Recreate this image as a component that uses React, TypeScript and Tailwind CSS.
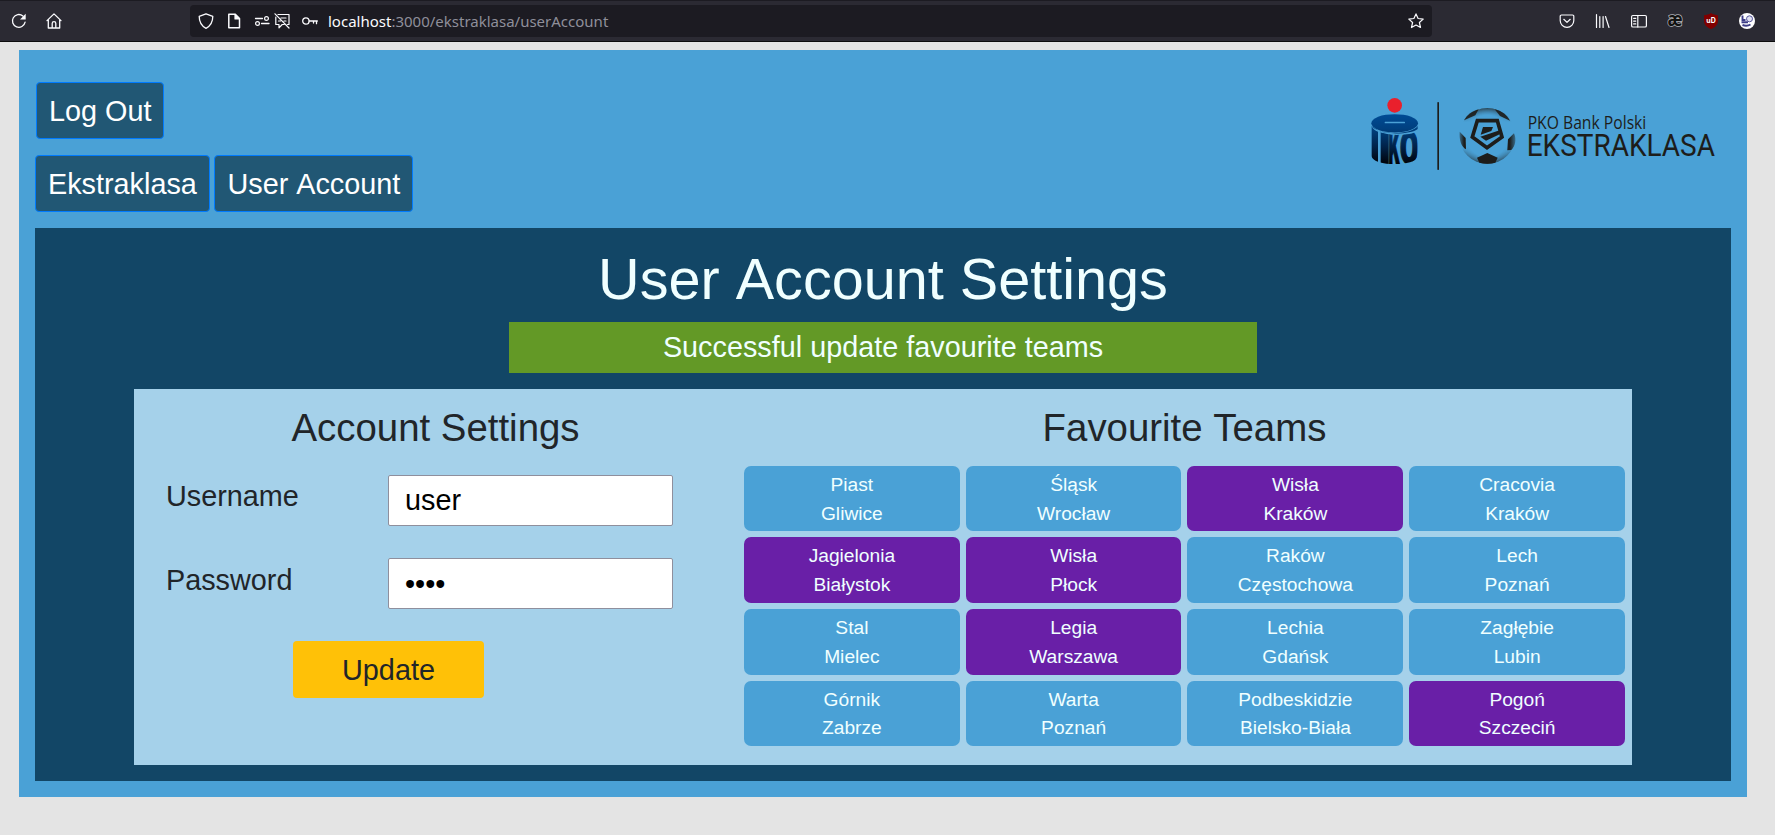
import React from "react";

const teams: [string, string, boolean][] = [
  ["Piast", "Gliwice", false],
  ["Śląsk", "Wrocław", false],
  ["Wisła", "Kraków", true],
  ["Cracovia", "Kraków", false],
  ["Jagielonia", "Białystok", true],
  ["Wisła", "Płock", true],
  ["Raków", "Częstochowa", false],
  ["Lech", "Poznań", false],
  ["Stal", "Mielec", false],
  ["Legia", "Warszawa", true],
  ["Lechia", "Gdańsk", false],
  ["Zagłębie", "Lubin", false],
  ["Górnik", "Zabrze", false],
  ["Warta", "Poznań", false],
  ["Podbeskidzie", "Bielsko-Biała", false],
  ["Pogoń", "Szczeciń", true],
];

function Icon({ className, children }: { className?: string; children: React.ReactNode }) {
  return (
    <svg
      viewBox="0 0 16 16"
      fill="none"
      stroke="#fbfbfe"
      strokeWidth="1.2"
      strokeLinecap="round"
      strokeLinejoin="round"
      className={"size-4 shrink-0 " + (className ?? "")}
    >
      {children}
    </svg>
  );
}

function Toolbar() {
  return (
    <header className="flex h-[42px] items-center border-t border-b border-t-[#1c1b22] border-b-[#0c0c0d] bg-[#2b2a33] pl-[11px] pr-5">
      <Icon>
        <path d="M14.1 9.2A6.400 6.400 0 1 1 11.900 3" strokeWidth="1.3" />
        <path d="M14.700 .8v5.600H9z" fill="#fbfbfe" stroke="none" />
      </Icon>
      <Icon className="ml-[19px]">
        <path d="M1 7.600 8 .9l7 6.700M2.300 6.800V15H13.700V6.800M6.200 14.800V10.500a1.800 1.800 0 0 1 3.600 0v4.300" strokeWidth="1.3" />
      </Icon>
      <div className="ml-32 flex h-8 w-[1242px] items-center rounded bg-[#1c1b22] pl-2 pr-2">
        <Icon>
          <path d="M8 .8 14.800 3.300C14.800 8.500 13 12.800 8 15.300 3 12.800 1.200 8.500 1.200 3.300z" strokeWidth="1.3" />
        </Icon>
        <Icon className="ml-3">
          <path d="M2.800 1.300H9.300L13.500 5.500V14.700H2.800z" strokeWidth="1.500" />
          <path d="M9 1.500V6h4.500z" fill="#fbfbfe" />
        </Icon>
        <Icon className="ml-3">
          <path d="M1.500 5.500H8.500M7.500 10.500h7.500" strokeWidth="1.300" />
          <circle cx="12.500" cy="5.500" r="1.900" />
          <circle cx="3.500" cy="10.500" r="1.900" />
        </Icon>
        <Icon className="ml-1">
          <path d="M4 1.500H15V11.500H13.500M1.800 4V11.500H5V14.800L8.200 11.500H10M7 5H12M10 8H12M4.500 8H6.500M1 .8 15 15" />
        </Icon>
        <Icon className="ml-3">
          <circle cx="3.900" cy="8" r="3.200" strokeWidth="1.300" />
          <path d="M7.200 8H15.400M14.500 8v2.700M11.500 8v2" strokeWidth="1.300" />
        </Icon>
        <div className="ml-[10px] whitespace-nowrap font-['Noto_Sans',sans-serif] text-[15px] leading-8 text-[#8f8f9a]">
          <span className="text-[#fbfbfe]">localhost</span>:3000/ekstraklasa/userAccount
        </div>
        <Icon className="ml-auto">
          <path d="m8 .9 2.100 4.600 5.100.6-3.800 3.400 1.100 5L8 12l-4.500 2.500 1.100-5L.8 6.100 5.900 5.500z" strokeWidth="1.200" />
        </Icon>
      </div>
      <div className="ml-auto flex items-center gap-5">
        <Icon>
          <path d="M2.500 2H13.500a1.300 1.300 0 0 1 1.300 1.300V7.500a6.800 6.800 0 0 1-13.600 0V3.300A1.300 1.300 0 0 1 2.500 2zM4.800 6.300 8 9.400l3.200-3.100" strokeWidth="1.200" />
        </Icon>
        <Icon>
          <path d="M1.500 1.500V14.500M4.800 3.500V14.500M8.100 3.500V14.500M10.500 3.500 14 14.500" />
        </Icon>
        <Icon>
          <rect x=".6" y="2.500" width="14.800" height="11.500" rx="1.300" strokeWidth="1.200" />
          <path d="M6.800 2.500V14M2.600 5.300H4.800M2.600 8.100H4.800M2.600 10.900H4.800" />
        </Icon>
        <svg viewBox="0 0 16 16" className="size-4 overflow-visible">
          <text x=".5" y="13.300" fontFamily="Noto Sans" fontWeight="700" fontSize="19" textLength="15" lengthAdjust="spacingAndGlyphs" fill="#111" stroke="#b4b4ba" strokeWidth="1.600" paintOrder="stroke">æ</text>
        </svg>
        <svg viewBox="0 0 16 16" className="size-4 overflow-visible">
          <path d="M8 0C6 1.500 3.500 2 1 2.200V7.500C1 12 4 14.500 8 16 12 14.500 15 12 15 7.500V2.200C12.500 2 10 1.500 8 0z" fill="#800000" />
          <text x="3.300" y="10" fontFamily="Inter" fontWeight="700" fontSize="7" textLength="9.400" lengthAdjust="spacingAndGlyphs" fill="#fff">uD</text>
        </svg>
        <svg viewBox="0 0 16 16" className="size-4">
          <circle cx="8" cy="8" r="8" fill="#fff" />
          <path d="M3.500 2.500v4.500h3M2.500 9.300H9M3.500 12c2 .8 5.500 1 8-.5" fill="none" stroke="#3c3c86" strokeWidth="1.900" />
          <circle cx="10.500" cy="5.800" r="3" fill="#dfe0f2" stroke="#55559a" />
        </svg>
      </div>
    </header>
  );
}

function LeagueLogo() {
  return (
    <svg viewBox="60 48 1050 225" className="h-[75px] w-[350px] overflow-visible">
      <defs>
        <linearGradient id="bank" x1="0" y1="100" x2="0" y2="252" gradientUnits="userSpaceOnUse">
          <stop offset="0" stopColor="#004c97" />
          <stop offset=".3" stopColor="#00407f" />
          <stop offset=".65" stopColor="#00234a" />
          <stop offset="1" stopColor="#000208" />
        </linearGradient>
        <radialGradient id="rim" cx="412" cy="168" r="84" gradientUnits="userSpaceOnUse">
          <stop offset=".75" stopColor="#1d1d1b" stopOpacity="0" />
          <stop offset="1" stopColor="#1d1d1b" stopOpacity=".7" />
        </radialGradient>
        <linearGradient id="fade" x1="0" y1="84" x2="0" y2="252" gradientUnits="userSpaceOnUse">
          <stop offset="0" stopColor="#fff" />
          <stop offset=".25" stopColor="#000" />
          <stop offset=".7" stopColor="#000" />
          <stop offset="1" stopColor="#fff" />
        </linearGradient>
        <linearGradient id="left" x1="0" y1="0" x2="1" y2="0">
          <stop offset="0" stopColor="#1d1d1b" stopOpacity=".4" />
          <stop offset=".7" stopColor="#1d1d1b" />
        </linearGradient>
        <linearGradient id="right" x1="1" y1="0" x2="0" y2="0">
          <stop offset="0" stopColor="#1d1d1b" stopOpacity=".4" />
          <stop offset=".7" stopColor="#1d1d1b" />
        </linearGradient>
        <mask id="ends">
          <rect x="320" y="80" width="190" height="180" fill="url(#fade)" />
        </mask>
        <clipPath id="drum">
          <path d="M64 130V227C68 246 100 252 134 252S200 246 203 227V154C190 161 170 165 140 165 120 165 100 160 91 157V130z" />
        </clipPath>
      </defs>
      <circle cx="134" cy="76" r="22" fill="#e9202c" />
      <ellipse cx="134" cy="130" rx="70" ry="27.500" fill="url(#bank)" />
      <rect x="104" y="125" width="61" height="5" rx="2" fill="#4aa1d6" />
      <path d="M65 138C68 147 75 152 84 155V245C74 241 65 235 65 227z" fill="url(#bank)" />
      <path d="M65 138C85 166 183 166 203 138V147C185 163 110 165 84 151z" fill="url(#bank)" />
      <g clipPath="url(#drum)" fill="url(#bank)" stroke="url(#bank)" fontFamily="Roboto" fontWeight="900" fontSize="138">
        <rect x="92" y="150" width="24" height="105" stroke="none" />
        <text x="115" y="253" textLength="34" lengthAdjust="spacingAndGlyphs" strokeWidth="3">K</text>
        <text x="150" y="253" textLength="55" lengthAdjust="spacingAndGlyphs" strokeWidth="5">O</text>
      </g>
      <rect x="262" y="66" width="5" height="204" rx="2" fill="#1d1d1b" />
      <circle cx="412" cy="168" r="84" fill="url(#rim)" mask="url(#ends)" />
      <g fill="#1d1d1b">
        <path d="M342 121C352 104 366 93 386 88L376 106z" fillOpacity=".9" />
        <path d="M434 88C455 92 470 105 480 122L450 108z" fillOpacity=".9" />
        <path d="M329 155 347 174 348 208C333 200 327 178 329 155z" fill="url(#left)" />
        <path d="M492 160C500 178 496 198 484 210L472 211 474 178z" fill="url(#right)" />
        <path d="M412 219 443 233 436 248C421 252 403 252 388 248L381 233z" />
      </g>
      <path d="M382 122H442L456 171 411 203 367 171z" fill="none" stroke="#1d1d1b" strokeWidth="11" />
      <path d="M399 141H429L424 153 392 164z" fill="#1d1d1b" />
      <path d="M391 170 449 151V163L408 182z" fill="#1d1d1b" />
      <g fill="#1d1d1b" fontFamily="Roboto, sans-serif">
        <text x="533" y="147" fontFamily="Open Sans" fontSize="52" textLength="356" lengthAdjust="spacingAndGlyphs">PKO Bank Polski</text>
        <text x="530" y="229" fontSize="95" fontWeight="400" textLength="565" lengthAdjust="spacingAndGlyphs">EKSTRAKLASA</text>
      </g>
    </svg>
  );
}

function NavButton({ children }: { children: React.ReactNode }) {
  return (
    <button className="h-[57px] rounded-[4px] border border-[#007bff] bg-[#215774] px-3 pt-[2px] leading-[43px] whitespace-nowrap text-white">
      {children}
    </button>
  );
}

function Field({ label, type, value }: { label: string; type: string; value: string }) {
  return (
    <label className="flex h-[51px] items-start">
      <span className="w-[222px] leading-[43px]">{label}</span>
      <input
        type={type}
        defaultValue={value}
        className="h-[51px] w-[285px] rounded-[2px] border border-[#8f8f9d] bg-white px-4 text-black"
      />
    </label>
  );
}

export default function App() {
  return (
    <div className="h-[835px] overflow-hidden bg-[#e4e4e4] font-['Liberation_Sans',Arial,sans-serif] text-[28.800px] text-[#212529]">
      <Toolbar />
      <div className="mt-2 ml-[19px] flex h-[747px] w-[1728px] flex-col bg-[#4aa1d6] px-4 pb-4">
        <div className="flex h-[178px] justify-between">
          <div className="pt-8">
            <div className="pl-px">
              <NavButton>Log Out</NavButton>
            </div>
            <nav className="mt-4 flex gap-1">
              <NavButton>Ekstraklasa</NavButton>
              <NavButton>
                <span className="pl-[.6px] [word-spacing:1.600px]">User Account</span>
              </NavButton>
            </nav>
          </div>
          <div className="pt-[46px] pr-[11px]">
            <LeagueLogo />
          </div>
        </div>
        <main className="flex h-[553px] flex-col items-center bg-[#124666] pt-[17px]">
          <h1 className="text-[57.600px] leading-[69px] text-[#f0ffff]">
            User <span className="inline-block">Account Settings</span>
          </h1>
          <div className="mt-2 h-[51px] w-[748px] bg-[#639926] text-center leading-[51px] text-[#f0ffff]">
            Successful update favourite teams
          </div>
          <div className="mt-4 flex h-[376px] w-[1498px] bg-[#a5d1ea]">
            <section className="w-[607px] pl-8">
              <h2 className="mt-4 -ml-[36px] text-center text-[38.400px] leading-[46px]">Account Settings</h2>
              <form className="mt-6">
                <Field label="Username" type="text" value="user" />
                <div className="h-8" />
                <div className="[&_input]:pt-[2px] [&_span]:pt-px">
                  <Field label="Password" type="password" value="1234" />
                </div>
                <button type="button" className="mt-8 ml-[127px] h-[57px] w-[191px] rounded-[4px] bg-[#ffc107] pt-[2px]">
                  Update
                </button>
              </form>
            </section>
            <section className="w-[887px]">
              <h2 className="mt-4 text-center text-[38.400px] leading-[46px] [word-spacing:.7px]">Favourite Teams</h2>
              <div className="mt-[14.800px] grid grid-cols-4 gap-[6px] pr-[3.200px] pl-[2.800px]">
                {teams.map(([club, city, favourite], i) => (
                  <button
                    key={i}
                    className={
                      "h-[65.600px] rounded-[7px] pt-[2.200px] pl-[.4px] text-[19.200px] leading-[28.800px] text-[#f0ffff] " +
                      (favourite ? "bg-[#691fa7]" : "bg-[#4aa1d6]")
                    }
                  >
                    {club}
                    <br />
                    {city}
                  </button>
                ))}
              </div>
            </section>
          </div>
        </main>
      </div>
    </div>
  );
}
